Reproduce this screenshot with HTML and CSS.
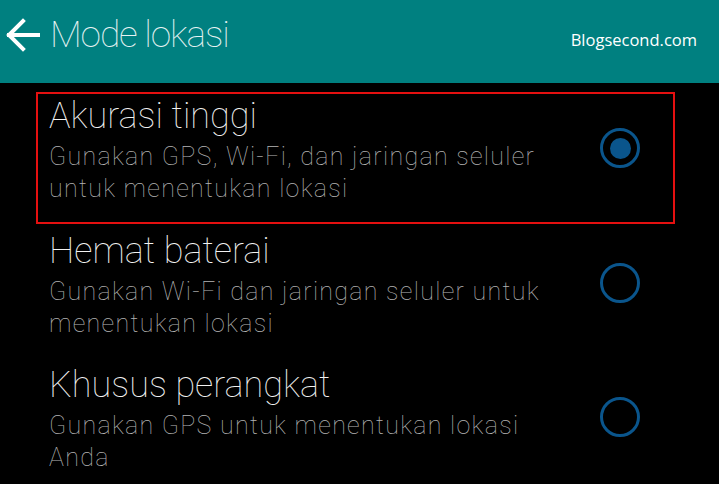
FILE: index.html
```html
<!DOCTYPE html>
<html lang="id">
<head>
<meta charset="utf-8">
<title>Mode lokasi</title>
<link rel="stylesheet" href="styles.css">
</head>
<body>
<header class="appbar">
  <svg class="back" width="34" height="34" viewBox="0 0 34 34" aria-hidden="true">
    <path d="M3 17 H33 M17 3 L3 17 L17 31" fill="none" stroke="#ffffff" stroke-width="4" stroke-linecap="square" stroke-linejoin="miter"/>
  </svg>
  <h1 class="title">Mode lokasi</h1>
  <span class="brand">Blogsecond.com</span>
</header>
<main class="list">
  <div class="item selected">
    <div class="text">
      <div class="item-title">Akurasi tinggi</div>
      <div class="item-sub">Gunakan GPS, Wi-Fi, dan jaringan seluler<br>untuk menentukan lokasi</div>
    </div>
    <span class="radio on"><span class="dot"></span></span>
  </div>
  <div class="item">
    <div class="text">
      <div class="item-title">Hemat baterai</div>
      <div class="item-sub">Gunakan Wi-Fi dan jaringan seluler untuk<br>menentukan lokasi</div>
    </div>
    <span class="radio"></span>
  </div>
  <div class="item">
    <div class="text">
      <div class="item-title">Khusus perangkat</div>
      <div class="item-sub">Gunakan GPS untuk menentukan lokasi<br>Anda</div>
    </div>
    <span class="radio"></span>
  </div>
</main>
</body>
</html>
```
FILE: styles.css
```css
html, body {
  margin: 0;
  padding: 0;
  background: #000000;
  width: 719px;
  height: 484px;
  overflow: hidden;
}
body {
  font-family: Roboto, "Liberation Sans", sans-serif;
}
.appbar {
  box-sizing: border-box;
  height: 83px;
  background: #008080;
  display: flex;
  align-items: center;
  padding: 0 22px 14px 6px;
}
.back {
  flex: none;
  display: block;
}
.title {
  margin: 0 0 0 10px;
  font-weight: 100;
  font-size: 37px;
  line-height: 40px;
  color: #e6f3f3;
  letter-spacing: -1.1px;
}
.brand {
  margin-left: auto;
  margin-top: 10px;
  font-family: "Open Sans", "Liberation Sans", sans-serif;
  font-size: 16.5px;
  color: #ffffff;
}
.list {
  padding-top: 9px;
  display: flex;
  flex-direction: column;
  gap: 2.5px;
}
.item {
  box-sizing: border-box;
  margin-left: 36px;
  width: 639px;
  height: 132px;
  border: 2px solid transparent;
  display: flex;
  align-items: flex-start;
}
.item.selected {
  border-color: #e51010;
}
.text {
  padding: 2px 0 0 11px;
  white-space: nowrap;
}
.item-title {
  font-weight: 100;
  font-size: 36px;
  line-height: 40px;
  color: #f2f2f2;
}
.item-sub {
  margin-top: 5px;
  font-weight: 100;
  font-size: 25px;
  line-height: 32px;
  letter-spacing: 1.3px;
  color: #b4b4b4;
}
.radio {
  box-sizing: border-box;
  flex: none;
  margin: 34px 33px 0 auto;
  width: 40px;
  height: 40px;
  border: 3.5px solid #0a558c;
  border-radius: 50%;
  display: flex;
  align-items: center;
  justify-content: center;
}
.dot {
  width: 21px;
  height: 21px;
  border-radius: 50%;
  background: #0a558c;
}
```
